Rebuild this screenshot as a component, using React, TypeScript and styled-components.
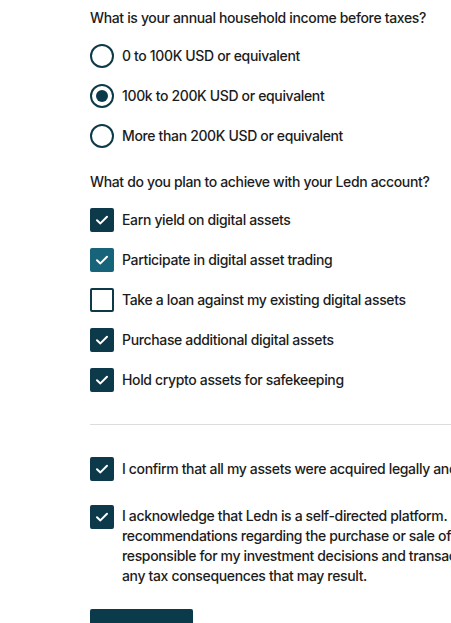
import React from "react";
import styled, { createGlobalStyle } from "styled-components";

const Global = createGlobalStyle`
  html, body { margin: 0; padding: 0; overflow: hidden; background: #ffffff; }
  body { font-family: Inter, "Noto Sans", Arial, sans-serif; color: #1c1c1c; }
`;

const Page = styled.div`
  padding: 8px 0 0 90px;
  width: 560px;
  display: flex;
  flex-direction: column;
`;

const Fieldset = styled.div<{ $mt?: number }>`
  display: flex;
  flex-direction: column;
  gap: 16px;
  margin-top: ${(p) => p.$mt ?? 0}px;
`;

const Legend = styled.div`
  font-size: 14px;
  line-height: 20px;
  font-weight: 500;
  letter-spacing: -0.35px;
  white-space: nowrap;
`;

const Row = styled.label`
  display: flex;
  align-items: flex-start;
  gap: 8px;
  font-size: 14px;
  line-height: 20px;
  font-weight: 500;
  letter-spacing: -0.35px;
`;

const Label = styled.span<{ $pad?: number }>`
  padding-top: ${(p) => p.$pad ?? 2}px;
  white-space: nowrap;
`;

const RadioCircle = styled.span<{ $on?: boolean }>`
  width: 24px;
  height: 24px;
  box-sizing: border-box;
  border: 2px solid #0d3a47;
  border-radius: 50%;
  flex: none;
  display: flex;
  align-items: center;
  justify-content: center;
  &::after {
    content: "";
    width: 12px;
    height: 12px;
    border-radius: 50%;
    background: ${(p) => (p.$on ? "#0b3b4b" : "transparent")};
  }
`;

const Box = styled.span<{ $state: "on" | "off" | "hover" }>`
  width: 24px;
  height: 24px;
  box-sizing: border-box;
  border-radius: 2px;
  flex: none;
  display: flex;
  align-items: center;
  justify-content: center;
  background: ${(p) =>
    p.$state === "on" ? "#0c3a4b" : p.$state === "hover" ? "#17637a" : "#ffffff"};
  border: 2px solid
    ${(p) => (p.$state === "on" ? "#0c3a4b" : p.$state === "hover" ? "#17637a" : "#0d3a47")};
`;

const Divider = styled.hr`
  border: none;
  border-top: 1px solid #dcdcdc;
  margin: 32px 0 0 0;
  width: 470px;
`;

const Consent = styled.div`
  margin-top: 32px;
  display: flex;
  flex-direction: column;
  gap: 24px;
`;

const Button = styled.button`
  margin-top: 23px;
  width: 103px;
  height: 40px;
  background: #0b3b4b;
  border: none;
  border-radius: 2px;
`;

const Check = () => (
  <svg width="16" height="16" viewBox="0 0 16 16" fill="none">
    <path d="M3 8.2 L6.4 11.4 L13 4.8" stroke="#fff" strokeWidth="2" strokeLinecap="round" strokeLinejoin="round" />
  </svg>
);

const CheckBox = ({ state }: { state: "on" | "off" | "hover" }) => (
  <Box $state={state}>{state !== "off" && <Check />}</Box>
);

export default function App() {
  const goals: [string, "on" | "off" | "hover"][] = [
    ["Earn yield on digital assets", "on"],
    ["Participate in digital asset trading", "hover"],
    ["Take a loan against my existing digital assets", "off"],
    ["Purchase additional digital assets", "on"],
    ["Hold crypto assets for safekeeping", "on"],
  ];
  return (
    <>
      <Global />
      <Page>
        <Fieldset>
          <Legend>What is your annual household income before taxes?</Legend>
          <Row>
            <RadioCircle />
            <Label>0 to 100K USD or equivalent</Label>
          </Row>
          <Row>
            <RadioCircle $on />
            <Label>100k to 200K USD or equivalent</Label>
          </Row>
          <Row>
            <RadioCircle />
            <Label>More than 200K USD or equivalent</Label>
          </Row>
        </Fieldset>
        <Fieldset $mt={24}>
          <Legend>What do you plan to achieve with your Ledn account?</Legend>
          {goals.map(([t, s]) => (
            <Row key={t}>
              <CheckBox state={s} />
              <Label>{t}</Label>
            </Row>
          ))}
        </Fieldset>
        <Divider />
        <Consent>
          <Row>
            <CheckBox state="on" />
            <Label>I confirm that all my assets were acquired legally and are not the proceeds of crime.</Label>
          </Row>
          <Row>
            <CheckBox state="on" />
            <Label $pad={1}>
              I acknowledge that Ledn is a self-directed platform. Ledn does not provide advice or
              <br />
              recommendations regarding the purchase or sale of digital assets. I am solely
              <br />
              responsible for my investment decisions and transactions, including
              <br />
              any tax consequences that may result.
            </Label>
          </Row>
        </Consent>
        <Button aria-label="Continue" />
      </Page>
    </>
  );
}
